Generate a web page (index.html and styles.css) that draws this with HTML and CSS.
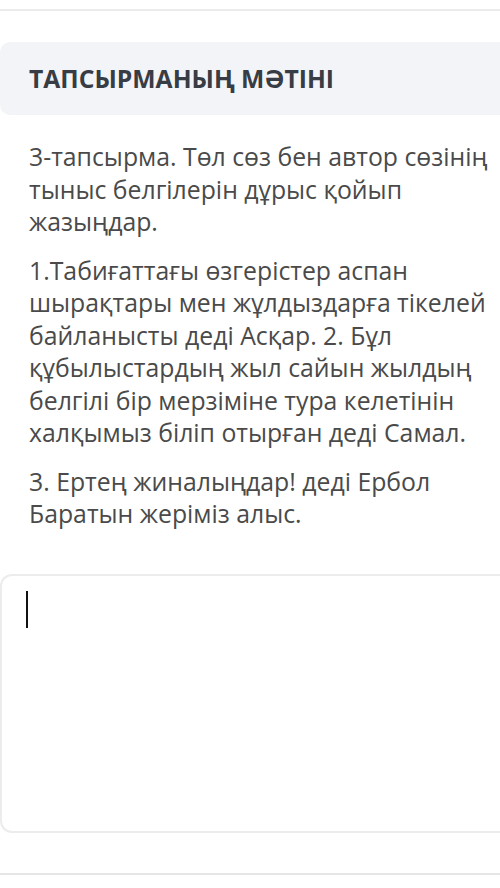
FILE: index.html
```html
<!doctype html>
<html lang="kk">
<head>
    <meta charset="UTF-8">
    <meta name="viewport" content="width=device-width, initial-scale=1.0">
    <title>Тапсырма</title>
    <link rel="stylesheet" href="styles.css">
</head>
<body>
<div id="page">
    <div class="top-line"></div>
    <div class="task-head">
        <span class="task-title">ТАПСЫРМАНЫҢ МӘТІНІ</span>
    </div>
    <div class="task-text">
        <p>3-тапсырма. Төл сөз бен автор сөзінің тыныс белгілерін дұрыс қойып жазыңдар.</p>
        <p>1.Табиғаттағы өзгерістер аспан шырақтары мен жұлдыздарға тікелей байланысты деді Асқар. 2. Бұл құбылыстардың жыл сайын жылдың белгілі бір мерзіміне тура келетінін халқымыз біліп отырған деді Самал.</p>
        <p>3. Ертең жиналыңдар! деді Ербол Баратын жеріміз алыс.</p>
    </div>
    <div class="answer">
        <span class="caret"></span>
    </div>
    <div class="bottom-line"></div>
</div>
</body>
</html>
```

FILE: styles.css
```css
html, body {
    margin: 0;
    padding: 0;
    background: #fff;
}

#page {
    width: 500px;
    font-family: "Open Sans", "Noto Sans", sans-serif;
    color: #4a4a4a;
}

.top-line {
    height: 9px;
    border-bottom: 2px solid #ececec;
}

.task-head {
    margin-top: 31px;
    height: 73px;
    display: flex;
    align-items: center;
    padding-left: 29px;
    background: #f3f4f7;
    border-radius: 10px 0 0 10px;
}

.task-title {
    font-size: 24.7px;
    font-weight: 700;
    color: #383c44;
}

.task-text {
    padding: 25px 4px 0 29px;
}

.task-text p {
    margin: 0 0 16px;
    font-size: 24.8px;
    line-height: 32.5px;
}

.answer {
    margin-top: 44px;
    height: 240px;
    border: 2px solid #ececec;
    border-right: none;
    border-radius: 12px 0 0 12px;
    padding: 15px 0 0 24px;
}

.caret {
    display: block;
    width: 2px;
    height: 37px;
    background: #111;
}

.bottom-line {
    margin-top: 40px;
    border-top: 2px solid #e6e6e6;
}
```
